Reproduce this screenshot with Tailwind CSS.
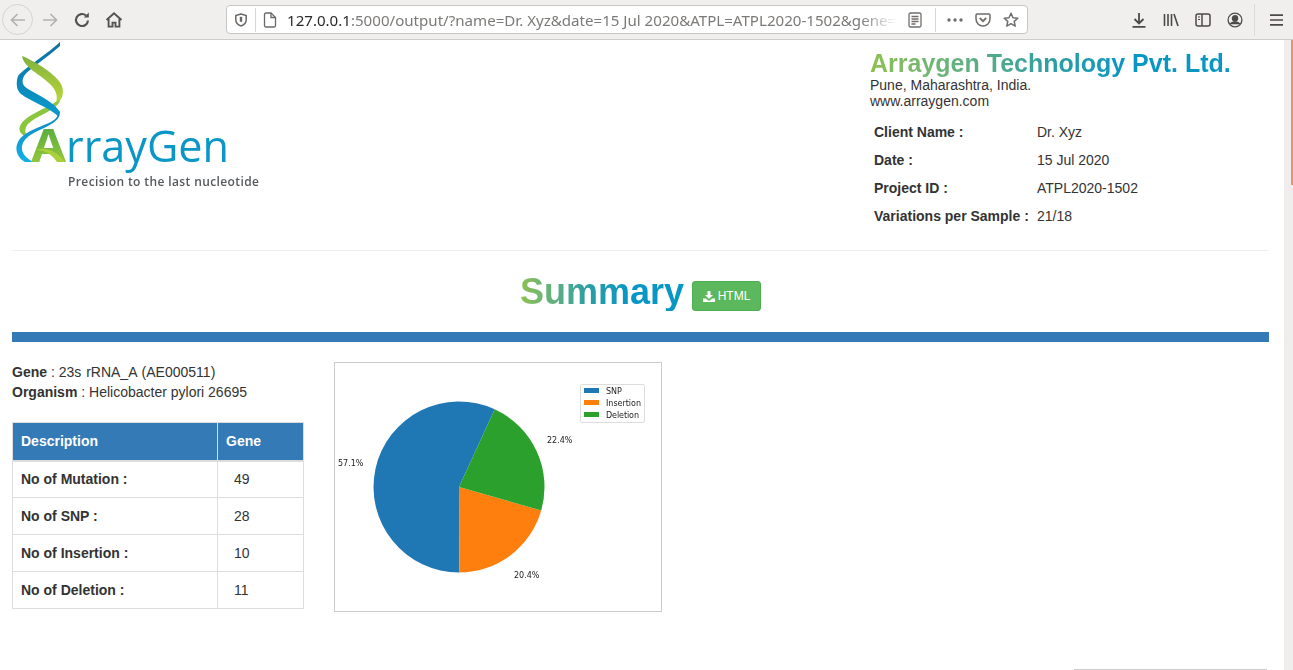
<!doctype html>
<html lang="en">
<head>
<meta charset="utf-8">
<title>Summary</title>
<script src="https://cdn.jsdelivr.net/npm/@tailwindcss/browser@4"></script>
</head>
<body class="m-0 bg-white">
<div class="flex h-[670px] w-[1293px] flex-col overflow-hidden font-['Liberation_Sans',Arial,sans-serif] text-[14px] text-[#333]">

  <!-- browser toolbar -->
  <div class="flex h-[40px] shrink-0 items-center border-b border-[#cfcdcb] bg-[#f1efed]">
    <div class="ml-[2px] flex h-[31px] w-[31px] items-center justify-center rounded-full border border-[#d6d4d2]">
      <svg width="18" height="18" viewBox="0 0 18 18" fill="none" stroke="#b4b2b0" stroke-width="1.7"><path d="M16 9H2.5M8.5 3 2.5 9l6 6"/></svg>
    </div>
    <div class="ml-[8px] flex w-[18px] justify-center">
      <svg width="18" height="18" viewBox="0 0 18 18" fill="none" stroke="#b4b2b0" stroke-width="1.7"><path d="M2 9h13.5M9.5 3l6 6-6 6"/></svg>
    </div>
    <div class="ml-[14px] flex w-[18px] justify-center">
      <svg width="18" height="18" viewBox="0 0 18 18" fill="none" stroke="#55534f" stroke-width="2.2"><path d="M15 9.500a6 6 0 1 1-2-5"/><path d="M15.800 1.500v5h-5" fill="#55534f" stroke="none"/></svg>
    </div>
    <div class="ml-[14px] flex w-[18px] justify-center">
      <svg width="18" height="18" viewBox="0 0 18 18" fill="none" stroke="#55534f" stroke-width="1.900"><path d="M1.500 9 9 2.200 16.500 9"/><path d="M3.600 8v7.600h3.900v-4h3v4h3.900V8"/></svg>
    </div>

    <div class="ml-[103px] flex h-[29px] w-[802px] items-center rounded-[4px] border border-[#c8c6c4] bg-white">
      <div class="ml-[7px] flex w-[14px] justify-center">
        <svg width="14" height="14" viewBox="0 0 14 14" fill="none" stroke="#6a6866" stroke-width="1.500"><path d="M7 1 1.800 2.600v4.200C1.800 10 4.500 12.200 7 13c2.500-.8 5.200-3 5.200-6.200V2.600z"/><path d="M7 3.800v5" stroke-width="2.400"/></svg>
      </div>
      <div class="ml-[7px] h-[24px] w-px bg-[#d8d6d4]"></div>
      <div class="ml-[7px] flex w-[14px] justify-center">
        <svg width="14" height="16" viewBox="0 0 14 16" fill="none" stroke="#6a6866" stroke-width="1.300"><path d="M1.500 2.500a1.500 1.500 0 0 1 1.500-1.500h5l4.500 4.500v8a1.500 1.500 0 0 1-1.500 1.500H3a1.500 1.500 0 0 1-1.500-1.500z"/><path d="M8 1v4.500h4.500"/></svg>
      </div>
      <div class="ml-[10px] w-[610px] whitespace-nowrap font-['Noto_Sans',sans-serif] text-[15.1px] leading-[20px] text-[#7c7a78] [mask-image:linear-gradient(to_right,#000_94%,transparent)]"><span class="text-[#2b2a28]">127.0.0.1</span>:5000/output/?name=Dr. Xyz&amp;date=15 Jul 2020&amp;ATPL=ATPL2020-1502&amp;gene=</div>
      <div class="ml-[10px] flex w-[16px] justify-center">
        <svg width="14" height="16" viewBox="0 0 14 16" fill="none" stroke="#706e6c" stroke-width="1.300"><rect x="1" y="1" width="12" height="14" rx="1.500"/><path d="M3.500 4.500h7M3.500 7h7M3.500 9.500h7M3.500 12h4"/></svg>
      </div>
      <div class="ml-[12px] h-[24px] w-px bg-[#d8d6d4]"></div>
      <div class="ml-[11px] flex w-[16px] justify-center">
        <svg width="16" height="4" viewBox="0 0 16 4" fill="#706e6c"><circle cx="2" cy="2" r="1.700"/><circle cx="8" cy="2" r="1.700"/><circle cx="14" cy="2" r="1.700"/></svg>
      </div>
      <div class="ml-[12px] flex w-[16px] justify-center">
        <svg width="16" height="14" viewBox="0 0 16 14" fill="none" stroke="#706e6c" stroke-width="1.500"><path d="M2.200 1h11.600A1.300 1.300 0 0 1 15 2.300V6A7 7 0 0 1 1 6V2.300A1.300 1.300 0 0 1 2.200 1z"/><path d="m4.800 5 3.200 3.200L11.200 5" stroke-width="1.800"/></svg>
      </div>
      <div class="ml-[12px] flex w-[16px] justify-center">
        <svg width="16" height="16" viewBox="0 0 16 16" fill="none" stroke="#706e6c" stroke-width="1.500"><path d="m8 1.300 2 4.400 4.800.5-3.600 3.200 1 4.700L8 11.700l-4.200 2.400 1-4.700L1.200 6.200 6 5.700z" stroke-linejoin="round"/></svg>
      </div>
    </div>

    <div class="ml-[103px] flex w-[16px] justify-center">
      <svg width="16" height="16" viewBox="0 0 16 16" fill="none" stroke="#4c4a48" stroke-width="1.800"><path d="M8 1v10M3.500 7 8 11.500 12.500 7M1.500 14.800h13"/></svg>
    </div>
    <div class="ml-[16px] flex w-[16px] justify-center">
      <svg width="16" height="14" viewBox="0 0 16 14" fill="none" stroke="#4c4a48" stroke-width="1.600"><path d="M1.500 1v12M5 1v12M8.500 1v12M11 1l4 12"/></svg>
    </div>
    <div class="ml-[16px] flex w-[16px] justify-center">
      <svg width="16" height="14" viewBox="0 0 16 14" fill="none" stroke="#4c4a48" stroke-width="1.500"><rect x="1" y="1" width="14" height="12" rx="2"/><path d="M7 1v12" stroke-width="1.500"/><path d="M3 4h2M3 6.500h2" stroke-width="1.200"/></svg>
    </div>
    <div class="ml-[16px] flex w-[16px] justify-center">
      <svg width="16" height="16" viewBox="0 0 16 16" fill="none" stroke="#4c4a48" stroke-width="1.300"><circle cx="8" cy="8" r="6.900"/><circle cx="8" cy="6.300" r="2.600" fill="#4c4a48"/><path d="M3.200 12.300C4.300 10.300 6 9.800 8 9.800s3.700.5 4.800 2.500" fill="#4c4a48"/></svg>
    </div>
    <div class="ml-[11px] h-[32px] w-px bg-[#dcdad8]"></div>
    <div class="ml-[15px] flex w-[13px] justify-center">
      <svg width="13" height="12" viewBox="0 0 13 12" fill="none" stroke="#4c4a48" stroke-width="1.700"><path d="M0 1.200h13M0 6h13M0 10.800h13"/></svg>
    </div>
  </div>

  <div class="flex min-h-0 flex-1">
    <!-- page -->
    <main class="w-[1284px] shrink-0 overflow-hidden pr-[15px] pl-[12px]">
      <header class="flex h-[210px] justify-between">
        <svg width="260" height="160" viewBox="12 40 260 160" class="shrink-0 blur-[0.3px]">
          <defs>
            <linearGradient id="gr" x1="0" y1="0" x2="0" y2="1"><stop offset="0" stop-color="#7fb23c"/><stop offset="1" stop-color="#b9d53a"/></linearGradient>
            <linearGradient id="bl" x1="0" y1="0" x2="0" y2="1"><stop offset="0" stop-color="#0f6f9e"/><stop offset="1" stop-color="#0a9ccf"/></linearGradient>
            <linearGradient id="bc" x1="0" y1="0" x2="0" y2="1"><stop offset="0" stop-color="#0f86bd"/><stop offset="1" stop-color="#12b0e6"/></linearGradient>
            <linearGradient id="ga" x1="0" y1="0" x2="0" y2="1"><stop offset="0" stop-color="#3fa33f"/><stop offset="1" stop-color="#a9cf3a"/></linearGradient>
          </defs>
          <path d="M61 98C50 108 30 112 21 124C17 130 21 135 28 138C25 133 24 129 28 124C36 116 52 112 59 103Z" fill="#8cc63f"/>
          <path d="M60 42L60 46C48 57 30 68 24 76C21 82 23 86 28 89C38 95 54 102 60 112L59 117C50 108 30 101 21 94C16 90 16 82 18 76C22 70 50 52 60 42Z" fill="url(#bl)"/>
          <path d="M22 56C32 60 54 72 61 84C64 90 63 96 61 99L56 102C58 96 56 90 50 84C40 74 24 68 22 56Z" fill="url(#gr)"/>
          <path d="M59 111C61 118 56 121 48 126C36 132 24 136 22 146C21 153 26 158 33 162L25 162C18 158 14 150 18 142C24 130 46 126 54 120C57 118 58 115 59 111Z" fill="url(#bc)"/>
          <text x="31" y="162" font-family="'Open Sans',sans-serif" font-size="47" font-weight="700" fill="url(#ga)" textLength="35" lengthAdjust="spacingAndGlyphs">A</text>
          <path d="M36 150C46 146 58 152 65 162L57 162C52 154 44 150 36 150Z" fill="#a9cf3a"/>
          <text x="66" y="162" font-family="'Open Sans',sans-serif" font-size="44" font-weight="400" fill="#0a96c6" textLength="163" lengthAdjust="spacingAndGlyphs">rrayGen</text>
          <text x="68" y="186" font-family="'Open Sans',sans-serif" font-size="12" font-weight="600" fill="#55595c" textLength="191" lengthAdjust="spacing">Precision to the last nucleotide</text>
        </svg>
        <div class="w-[399px] shrink-0 pt-[9px]">
          <div class="w-fit bg-linear-to-r from-[#8dc04f] via-[#2b9fa0] via-50% to-[#0896c4] to-70% bg-clip-text text-[25px] leading-[28px] font-bold text-transparent">Arraygen Technology Pvt. Ltd.</div>
          <div class="leading-[16px]">Pune, Maharashtra, India.</div>
          <div class="leading-[16px]">www.arraygen.com</div>
          <div class="mt-[9px] grid grid-cols-[163px_1fr] auto-rows-[28px] items-center pl-[4px]">
            <div class="font-bold">Client Name :</div><div>Dr. Xyz</div>
            <div class="font-bold">Date :</div><div>15 Jul 2020</div>
            <div class="font-bold">Project ID :</div><div>ATPL2020-1502</div>
            <div class="font-bold">Variations per Sample :</div><div>21/18</div>
          </div>
        </div>
      </header>

      <div class="h-px bg-[#eeeeee]"></div>

      <div class="mt-[20px] flex h-[40px] items-end justify-center gap-[8px]">
        <h1 class="h-[40px] w-fit bg-linear-to-r from-[#8dc04f] via-[#2b9fa0] via-40% to-[#0896c4] to-65% bg-clip-text text-[36px] leading-[42px] font-bold text-transparent">Summary</h1>
        <div class="flex h-[30px] w-[69px] items-center justify-center gap-[3px] rounded-[3px] border border-[#4cae4c] bg-[#5cb85c] text-[12px] text-white">
          <svg width="12" height="11" viewBox="0 0 12 11" fill="#fff"><path d="M4.500 0h3v4h2.500L6 8 2 4h2.500z"/><path d="M0 7.500h2.800L5 9.500h2l2.200-2H12V11H0z"/></svg>
          <span>HTML</span>
        </div>
      </div>

      <div class="mt-[21px] h-[10px] bg-[#337ab7]"></div>

      <section class="flex items-start gap-[30px]">
        <div class="w-[292px] shrink-0 pt-[20px]">
          <div class="leading-[20px]"><b>Gene</b> : <span class="[word-spacing:1px]">23s rRNA_A (AE000511)</span></div>
          <div class="leading-[20px]"><b>Organism</b> : Helicobacter pylori 26695</div>
          <table class="mt-[20px] w-[292px] table-fixed border-collapse">
            <thead>
              <tr class="h-[38px] bg-[#337ab7] text-left font-bold text-white">
                <th class="w-[205px] border border-b-2 border-[#dddddd] px-[8px]">Description</th>
                <th class="border border-b-2 border-[#dddddd] px-[8px]">Gene</th>
              </tr>
            </thead>
            <tbody>
              <tr class="h-[37px]"><td class="border border-[#dddddd] px-[8px] font-bold">No of Mutation :</td><td class="border border-[#dddddd] pl-[16px]">49</td></tr>
              <tr class="h-[37px]"><td class="border border-[#dddddd] px-[8px] font-bold">No of SNP :</td><td class="border border-[#dddddd] pl-[16px]">28</td></tr>
              <tr class="h-[37px]"><td class="border border-[#dddddd] px-[8px] font-bold">No of Insertion :</td><td class="border border-[#dddddd] pl-[16px]">10</td></tr>
              <tr class="h-[37px]"><td class="border border-[#dddddd] px-[8px] font-bold">No of Deletion :</td><td class="border border-[#dddddd] pl-[16px]">11</td></tr>
            </tbody>
          </table>
        </div>

        <div class="mt-[20px] h-[250px] w-[328px] shrink-0 border border-[#cccccc] bg-white">
          <svg width="326" height="248" viewBox="335 363 326 248" font-family="'DejaVu Sans',sans-serif" font-size="8" fill="#222" class="blur-[0.25px]">
            <path d="M459 487 L494.700 409.300 A85.500 85.500 0 1 0 459.400 572.500Z" fill="#1f77b4"/>
            <path d="M459 487 L459.400 572.500 A85.500 85.500 0 0 0 541.200 510.500Z" fill="#ff7f0e"/>
            <path d="M459 487 L541.200 510.500 A85.500 85.500 0 0 0 494.700 409.300Z" fill="#2ca02c"/>
            <text x="338" y="466">57.1%</text>
            <text x="547" y="443">22.4%</text>
            <text x="514" y="578">20.4%</text>
            <rect x="580.500" y="384.500" width="64" height="38" rx="1.500" fill="#fff" stroke="#dddddd"/>
            <rect x="584" y="388" width="15" height="5" fill="#1f77b4"/>
            <rect x="584" y="400" width="15" height="5" fill="#ff7f0e"/>
            <rect x="584" y="412" width="15" height="5" fill="#2ca02c"/>
            <text x="606" y="393.500">SNP</text>
            <text x="606" y="405.500" textLength="35">Insertion</text>
            <text x="606" y="417.500" textLength="33">Deletion</text>
          </svg>
        </div>
      </section>

      <div class="mt-[57px] mr-[2px] ml-auto h-[10px] w-[193px] border-t border-[#cccccc]"></div>
    </main>

    <!-- scrollbar -->
    <div class="flex w-[9px] shrink-0 justify-end bg-[#f0eeed]">
      <div class="h-[145px] w-[2px] bg-[#f0906a]"></div>
    </div>
  </div>
</div>
</body>
</html>
